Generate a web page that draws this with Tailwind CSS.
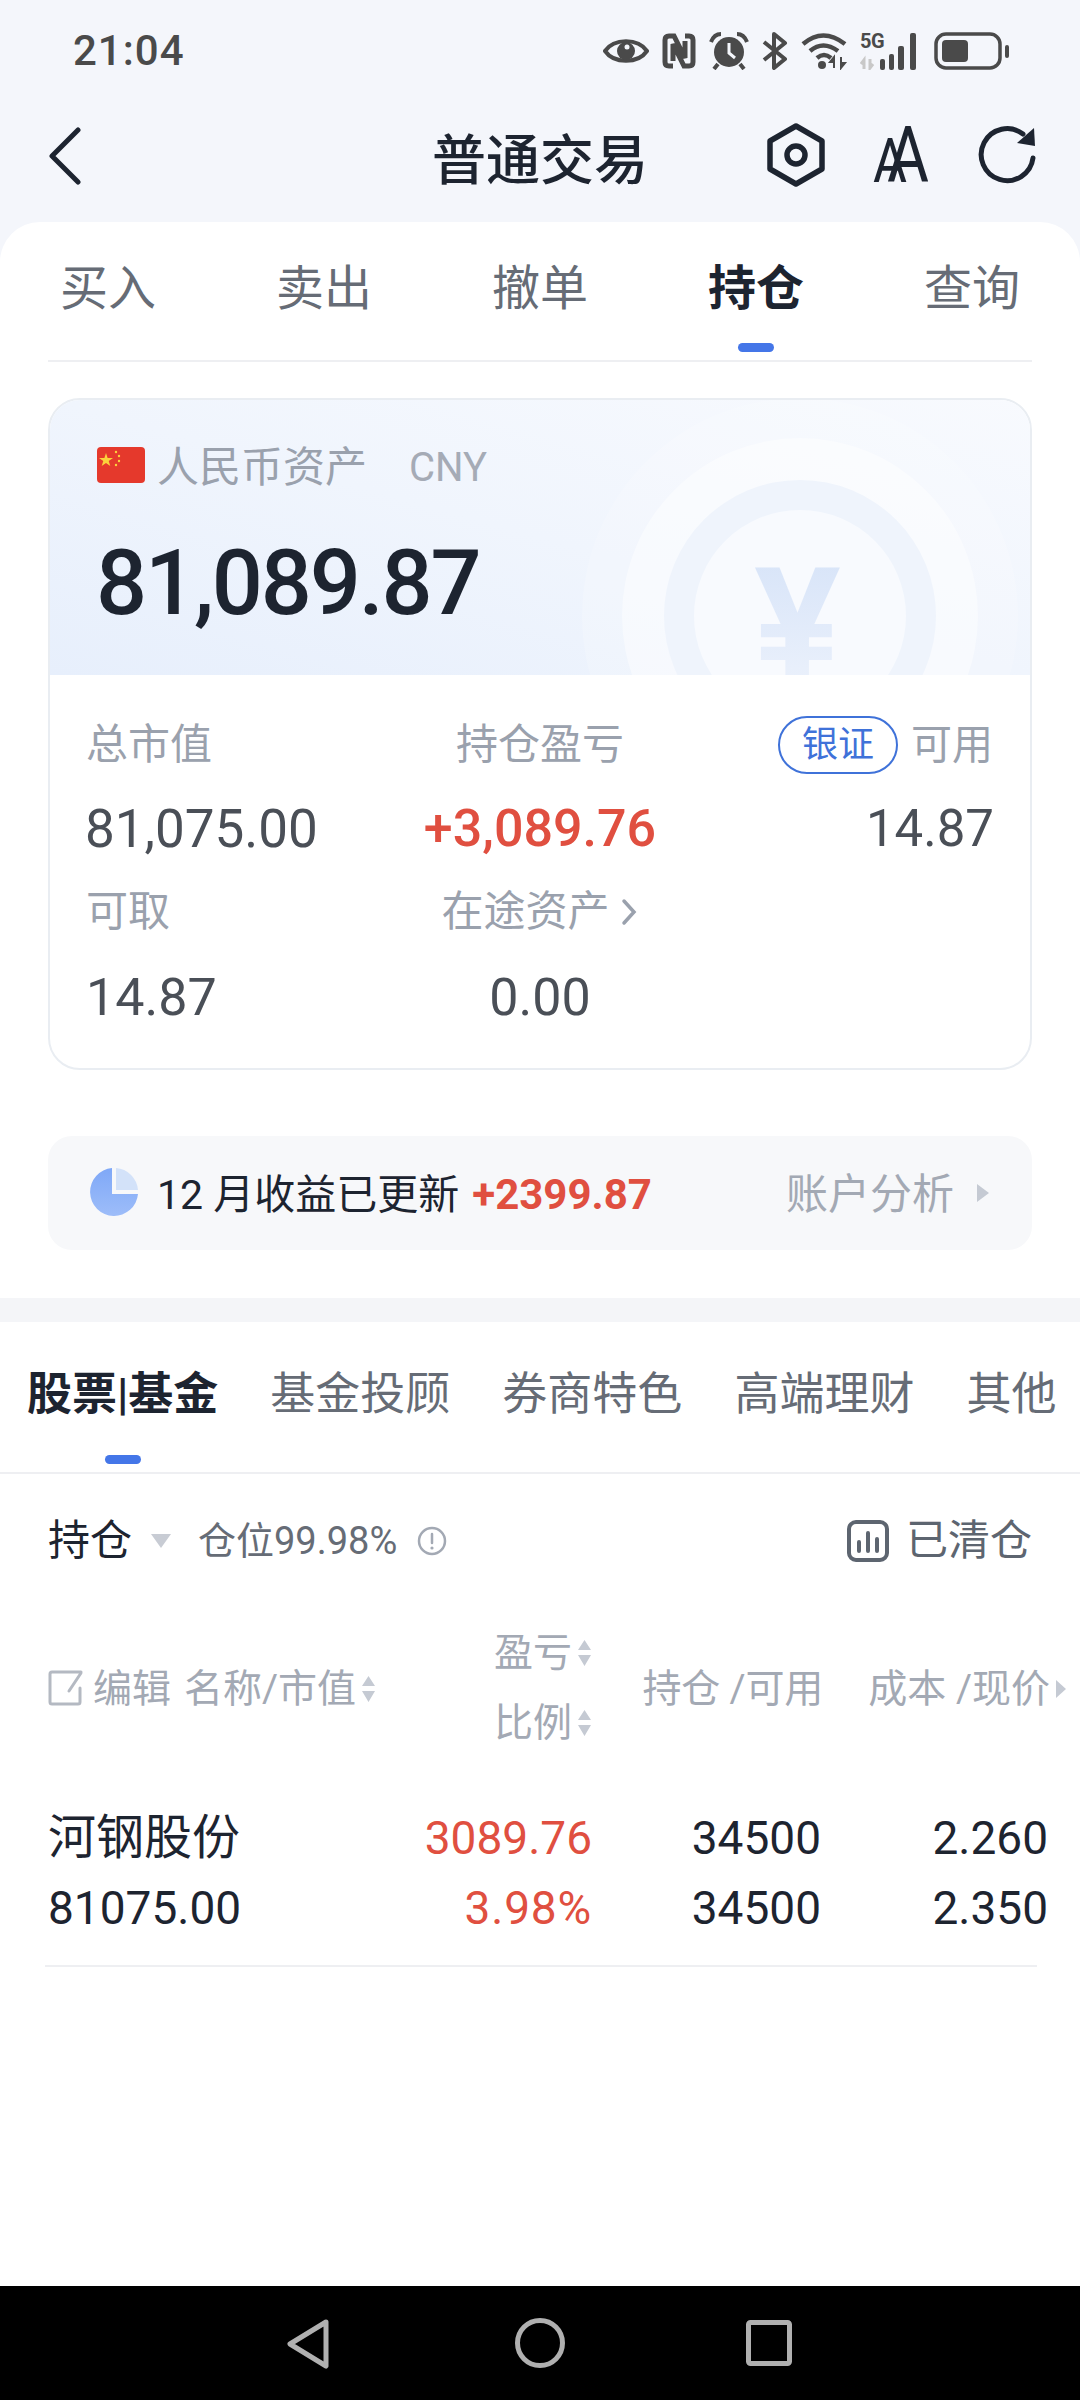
<!DOCTYPE html>
<html lang="zh-CN">
<head>
  <meta charset="UTF-8" />
  <meta name="viewport" content="width=device-width, initial-scale=1.0"/>
  <title>普通交易</title>
  <script src="https://cdn.jsdelivr.net/npm/@tailwindcss/browser@4"></script>
</head>
<body class="w-[1080px] h-[2400px] flex flex-col overflow-hidden bg-[#f4f6fb] text-[#1d2430] font-['Roboto','Noto_Sans_CJK_SC',sans-serif]">

  <!-- 状态栏 -->
  <div class="h-[104px] flex items-center justify-between pl-[73px] pr-[70px] pb-[2px] text-[#4a4a4a]">
    <span class="text-[42px] leading-none font-medium tracking-[1px]">21:04</span>
    <div class="flex items-center gap-[13px]">
      <svg width="46" height="30" viewBox="0 0 46 30"><path d="M2 15C11 2 35 2 44 15 35 28 11 28 2 15Z" fill="none" stroke="#4a4a4a" stroke-width="4"/><circle cx="23" cy="15" r="9" fill="#4a4a4a"/><circle cx="24" cy="11" r="2.5" fill="#f4f6fb"/></svg>
      <svg width="34" height="36" viewBox="0 0 34 36"><path d="M11 33H7Q3 33 3 29V7Q3 3 7 3H12L23 25V8M23 3H27Q31 3 31 7V29Q31 33 27 33H22L11 11V28" fill="none" stroke="#4a4a4a" stroke-width="5"/></svg>
      <svg width="40" height="38" viewBox="0 0 40 38"><circle cx="20" cy="20" r="15" fill="#4a4a4a"/><path d="M2 10Q5 2 12 2M38 10Q35 2 28 2M9 32 5 37M31 32 35 37" fill="none" stroke="#4a4a4a" stroke-width="4"/><path d="M20 11V21L26 26" fill="none" stroke="#f4f6fb" stroke-width="3"/></svg>
      <svg width="26" height="38" viewBox="0 0 26 38"><path d="M2 10 23 27 12 36V2L23 11 2 28" fill="none" stroke="#4a4a4a" stroke-width="4" stroke-linejoin="round"/></svg>
      <svg width="48" height="38" viewBox="0 0 48 38"><path d="M2 12Q22-5 44 12M9 19Q22 8 37 19M16 26Q23 20 30 26" fill="none" stroke="#4a4a4a" stroke-width="4.5"/><circle cx="21" cy="33" r="4" fill="#4a4a4a"/><path d="M33 36V25M33 25 29 30H33ZM40 25V36M40 36 44 31H40Z" fill="#4a4a4a" stroke="#4a4a4a" stroke-width="2"/></svg>
      <div class="relative w-[62px] h-[38px] -ml-[2px]">
        <span class="absolute left-0 top-[-1px] text-[20px] leading-[20px] font-bold tracking-[-0.5px]">5G</span>
        <svg class="absolute inset-0" width="62" height="38" viewBox="0 0 62 38"><path d="M4 37V28L1 32M10 27V36L13 32" fill="none" stroke="#c8c8c8" stroke-width="3"/><rect x="20" y="27" width="5" height="11" rx="2" fill="#4a4a4a"/><rect x="29" y="22" width="5" height="16" rx="2" fill="#4a4a4a"/><rect x="38" y="14" width="6" height="24" rx="2" fill="#4a4a4a"/><rect x="50" y="1" width="6" height="37" rx="2" fill="#4a4a4a"/></svg>
      </div>
      <svg width="76" height="38" viewBox="0 0 76 38" class="-ml-[1px]"><rect x="2" y="2" width="64" height="34" rx="10" fill="none" stroke="#4a4a4a" stroke-width="3.5"/><rect x="8" y="8" width="26" height="22" rx="4" fill="#4a4a4a"/><rect x="71" y="13" width="4" height="13" rx="2" fill="#4a4a4a"/></svg>
    </div>
  </div>

  <!-- 标题栏 -->
  <div class="h-[118px] relative flex items-center justify-center">
    <svg class="absolute left-[48px] top-[23px]" width="34" height="58" viewBox="0 0 34 58"><path d="M30 3 4 29 30 55" fill="none" stroke="#1d2430" stroke-width="5" stroke-linecap="round" stroke-linejoin="round"/></svg>
    <span class="text-[54px] leading-none font-medium -mt-[2px]">普通交易</span>
    <div class="absolute right-[42px] top-[19px] flex items-center gap-[47px]">
      <svg width="60" height="64" viewBox="0 0 60 64"><path d="M30 3 56 18V46L30 61 4 46V18Z" fill="none" stroke="#1d2430" stroke-width="5.5" stroke-linejoin="round"/><circle cx="30" cy="32" r="9" fill="none" stroke="#1d2430" stroke-width="5.5"/></svg>
      <svg width="58" height="60" viewBox="0 0 58 60" class="overflow-visible"><text x="0" y="57" font-size="62" font-family="Roboto" font-weight="400" fill="#1d2430" textLength="34" lengthAdjust="spacingAndGlyphs">A</text><text x="14" y="57" font-size="78" font-family="Roboto" font-weight="400" fill="#1d2430" textLength="42" lengthAdjust="spacingAndGlyphs">A</text></svg>
      <svg width="60" height="60" viewBox="0 0 60 60"><path d="M55 33A26 26 0 1 1 45 9" fill="none" stroke="#1d2430" stroke-width="5" stroke-linecap="round"/><path d="M56 3 57 21 39 18Z" fill="#1d2430"/></svg>
    </div>
  </div>

  <!-- 主内容 -->
  <div class="flex-1 bg-white rounded-t-[40px] flex flex-col">

    <!-- 交易 tab -->
    <div class="grid grid-cols-5 pt-[43px] text-[48px] leading-[48px] text-[#666c76]">
      <div class="flex flex-col items-center"><span>买入</span></div>
      <div class="flex flex-col items-center"><span>卖出</span></div>
      <div class="flex flex-col items-center"><span>撤单</span></div>
      <div class="flex flex-col items-center">
        <span class="font-bold text-[#1d2430]">持仓</span>
        <div class="mt-[30px] w-[36px] h-[9px] rounded-full bg-[#4476e8]"></div>
      </div>
      <div class="flex flex-col items-center"><span>查询</span></div>
    </div>
    <div class="mx-[48px] mt-[8px] h-[2px] bg-[#eeeff2]"></div>

    <!-- 资产卡片 -->
    <div class="mx-[48px] mt-[36px] h-[672px] rounded-[32px] border-2 border-[#e9edf2] overflow-hidden">
      <div class="relative h-[275px] pl-[47px] pt-[44px] overflow-hidden bg-linear-to-tr from-[#e7effc] via-[#f0f5fd] to-[#f8fafe]">
        <svg class="absolute left-0 top-[-400px]" width="1080" height="675" viewBox="50 0 1080 675">
          <circle cx="800" cy="616" r="218" fill="#ffffff" fill-opacity=".18"/>
          <circle cx="800" cy="616" r="178" fill="#ffffff" fill-opacity=".45"/>
          <circle cx="800" cy="616" r="136" fill="#eff4fc"/>
          <circle cx="800" cy="616" r="106" fill="#f8fafe"/>
        </svg>
        <span class="absolute left-[704px] top-[146px] text-[162px] leading-[162px] font-bold bg-linear-to-b from-[#d6e3f8] to-[#eef3fc] bg-clip-text text-transparent">¥</span>
        <div class="relative flex items-center h-[48px]">
          <svg width="48" height="36" viewBox="0 0 48 36" class="-mt-[6px]"><rect width="48" height="36" rx="4" fill="#e5392c"/><path d="M9 6 10.6 11H16L11.7 14 13.3 19 9 16 4.7 19 6.300 14 2 11H7.400Z" fill="#fbd23c"/><circle cx="19" cy="5" r="1.2" fill="#fbd23c"/><circle cx="22" cy="9" r="1.2" fill="#fbd23c"/><circle cx="22" cy="14" r="1.2" fill="#fbd23c"/><circle cx="19" cy="18" r="1.2" fill="#fbd23c"/></svg>
          <span class="ml-[12px] text-[42px] leading-[48px] text-[#9aa1ad]">人民币资产</span>
          <span class="ml-[42px] text-[40px] leading-[48px] text-[#a5abb6]">CNY</span>
        </div>
        <div class="relative mt-[42px] -ml-[1px] text-[90px] leading-[100px] font-medium tracking-[-2.2px] text-[#1d2430]">81,089.87</div>
      </div>

      <div class="px-[37px] pt-[46px]">
        <div class="grid grid-cols-3 text-[42px] leading-[48px] text-[#9aa1ad]">
          <span class="-ml-[1px]">总市值</span>
          <span class="text-center">持仓盈亏</span>
          <div class="flex items-center justify-end h-[48px]">
            <span class="h-[58px] w-[120px] shrink-0 flex items-center justify-center rounded-full border-2 border-[#3f72d9] text-[36px] text-[#3f72d9]">银证</span>
            <span class="ml-[13px] text-[41px]">可用</span>
          </div>
        </div>
        <div class="grid grid-cols-3 mt-[30px] text-[53px] leading-[60px] text-[#4a4f57]">
          <span class="-ml-[2px]">81,075.00</span>
          <span class="text-center text-[52px] font-medium text-[#e04f40]">+3,089.76</span>
          <span class="text-right text-[51px] -mr-[1px]">14.87</span>
        </div>
        <div class="grid grid-cols-3 mt-[29px] text-[42px] leading-[48px] text-[#9aa1ad]">
          <span class="-ml-[1px]">可取</span>
          <div class="flex items-center justify-center gap-[11px] -ml-[2px]">
            <span>在途资产</span>
            <svg width="16" height="28" viewBox="0 0 16 28"><path d="M3 3 13 14 3 25" fill="none" stroke="#9aa1ad" stroke-width="3.5" stroke-linecap="round"/></svg>
          </div>
          <span></span>
        </div>
        <div class="grid grid-cols-3 mt-[32px] text-[52px] leading-[60px] text-[#4a4f57]">
          <span class="-ml-[1px]">14.87</span>
          <span class="text-center">0.00</span>
          <span></span>
        </div>
      </div>
    </div>

    <!-- 收益提示 -->
    <div class="mx-[48px] mt-[66px] h-[114px] rounded-[24px] bg-[#f7f8fa] flex items-center pl-[42px] pr-[42px]">
      <svg width="48" height="48" viewBox="0 0 48 48" class="shrink-0 -mt-[2px]">
        <defs><linearGradient id="pie" x1="0" y1="0" x2="0" y2="1"><stop offset="0" stop-color="#7fa8f7"/><stop offset="1" stop-color="#9dbdf9"/></linearGradient></defs>
        <path d="M22 0A24 24 0 1 0 48 26H22Z" fill="url(#pie)"/>
        <path d="M26 0A24 24 0 0 1 48 22H26Z" fill="#d3e2f9"/>
      </svg>
      <span class="ml-[19px] mt-[4px] text-[41px] leading-[48px]">12 月收益已更新</span>
      <span class="ml-[13px] mt-[4px] text-[42px] leading-[48px] font-bold text-[#e04f40]">+2399.87</span>
      <span class="ml-auto mt-[3px] text-[42px] leading-[48px] text-[#a3a9b4]">账户分析</span>
      <svg class="ml-[22px]" width="14" height="20" viewBox="0 0 14 20"><path d="M1 1 13 10 1 19Z" fill="#c5cad3"/></svg>
    </div>

    <div class="mt-[48px] h-[24px] bg-[#f4f5f8]"></div>

    <!-- 持仓分类 tab -->
    <div class="pl-[27px] pt-[43px] flex gap-[52px] text-[45px] leading-[60px] text-[#666c76] whitespace-nowrap">
      <div class="flex flex-col items-center">
        <span class="font-bold text-[#1d2430]">股票|基金</span>
        <div class="mt-[30px] w-[36px] h-[9px] rounded-full bg-[#4476e8]"></div>
      </div>
      <span>基金投顾</span>
      <span>券商特色</span>
      <span>高端理财</span>
      <span>其他</span>
    </div>
    <div class="mt-[8px] h-[2px] bg-[#eeeff2]"></div>

    <!-- 持仓行 -->
    <div class="mt-[43px] mx-[48px] h-[48px] flex items-center">
      <span class="text-[42px] leading-[48px]">持仓</span>
      <svg class="ml-[18px]" width="22" height="16" viewBox="0 0 22 16"><path d="M1 1H21L11 15Z" fill="#c8ccd4"/></svg>
      <span class="ml-[26px] text-[38px] leading-[48px] text-[#666c76]">仓位99.98%</span>
      <svg class="ml-[20px]" width="30" height="30" viewBox="0 0 30 30"><circle cx="15" cy="15" r="13" fill="none" stroke="#a3a9b4" stroke-width="2.5"/><path d="M15 8V17" stroke="#a3a9b4" stroke-width="2.5" stroke-linecap="round"/><circle cx="15" cy="22" r="1.6" fill="#a3a9b4"/></svg>
      <svg class="ml-auto" width="42" height="42" viewBox="0 0 42 42"><rect x="2" y="2" width="38" height="38" rx="7" fill="none" stroke="#5d6570" stroke-width="4"/><path d="M12 22V31M21 13V31M30 19V31" stroke="#5d6570" stroke-width="4" stroke-linecap="round"/></svg>
      <span class="ml-[17px] text-[42px] leading-[48px] text-[#5d6570]">已清仓</span>
    </div>

    <!-- 表头 -->
    <div class="mt-[64px] pl-[48px] grid grid-cols-[352px_192px_231px_244px] items-center text-[39px] leading-[48px] text-[#a3a9b4] whitespace-nowrap">
      <div class="flex items-center">
        <svg width="36" height="36" viewBox="0 0 36 36"><path d="M33 2H4Q2 2 2 4V32Q2 34 4 34H30Q32 34 32 32V18M33 3 21 21" fill="none" stroke="#b4b9c2" stroke-width="3" stroke-linecap="round"/></svg>
        <span class="ml-[9px] mt-[2px]">编辑</span>
        <span class="ml-[13px] mt-[2px]">名称/市值</span>
        <svg class="ml-[5px] mt-[2px]" width="15" height="28" viewBox="0 0 15 28"><path d="M7.500 1 14 11H1ZM1 16H14L7.500 27Z" fill="#c5cad3"/></svg>
      </div>
      <div class="flex flex-col items-end gap-[22px]">
        <div class="flex items-center">
          <span>盈亏</span>
          <svg class="ml-[5px]" width="15" height="28" viewBox="0 0 15 28"><path d="M7.500 1 14 11H1ZM1 16H14L7.500 27Z" fill="#c5cad3"/></svg>
        </div>
        <div class="flex items-center">
          <span>比例</span>
          <svg class="ml-[5px]" width="15" height="28" viewBox="0 0 15 28"><path d="M7.500 1 14 11H1ZM1 16H14L7.500 27Z" fill="#c5cad3"/></svg>
        </div>
      </div>
      <span class="text-right mt-[2px] pl-[2px] tracking-[-0.2px]">持仓 /可用</span>
      <div class="flex items-center justify-end mt-[2px]">
        <span>成本 /现价</span>
        <svg class="ml-[5px]" width="12" height="20" viewBox="0 0 12 20"><path d="M1 1 11 10 1 19Z" fill="#c5cad3"/></svg>
      </div>
    </div>

    <!-- 持仓数据 -->
    <div class="mt-[61px] pl-[48px] grid grid-cols-[352px_192px_231px_225px] gap-y-[10px] text-[46px] leading-[60px] whitespace-nowrap">
      <span class="text-[48px]">河钢股份</span>
      <span class="text-right text-[#e04f40]">3089.76</span>
      <span class="text-right pr-[2px]">34500</span>
      <span class="text-right">2.260</span>
      <span>81075.00</span>
      <span class="text-right text-[#e04f40] tracking-[0.8px]">3.98%</span>
      <span class="text-right pr-[2px]">34500</span>
      <span class="text-right">2.350</span>
    </div>
    <div class="mt-[27px] ml-[45px] w-[992px] h-[2px] bg-[#eeeff2]"></div>
  </div>

  <!-- 导航栏 -->
  <div class="h-[114px] bg-black flex items-start pt-[32px] pl-[286px]">
    <svg width="44" height="52" viewBox="0 0 44 52"><path d="M40 4 4 26 40 48Z" fill="none" stroke="#b0b0b0" stroke-width="5" stroke-linejoin="round"/></svg>
    <svg class="ml-[185px]" width="50" height="50" viewBox="0 0 50 50"><circle cx="25" cy="25" r="22.500" fill="none" stroke="#b0b0b0" stroke-width="5"/></svg>
    <svg class="ml-[181px] mt-[2px]" width="46" height="46" viewBox="0 0 46 46"><rect x="2.500" y="2.500" width="41" height="41" rx="2" fill="none" stroke="#b0b0b0" stroke-width="5"/></svg>
  </div>
</body>
</html>
